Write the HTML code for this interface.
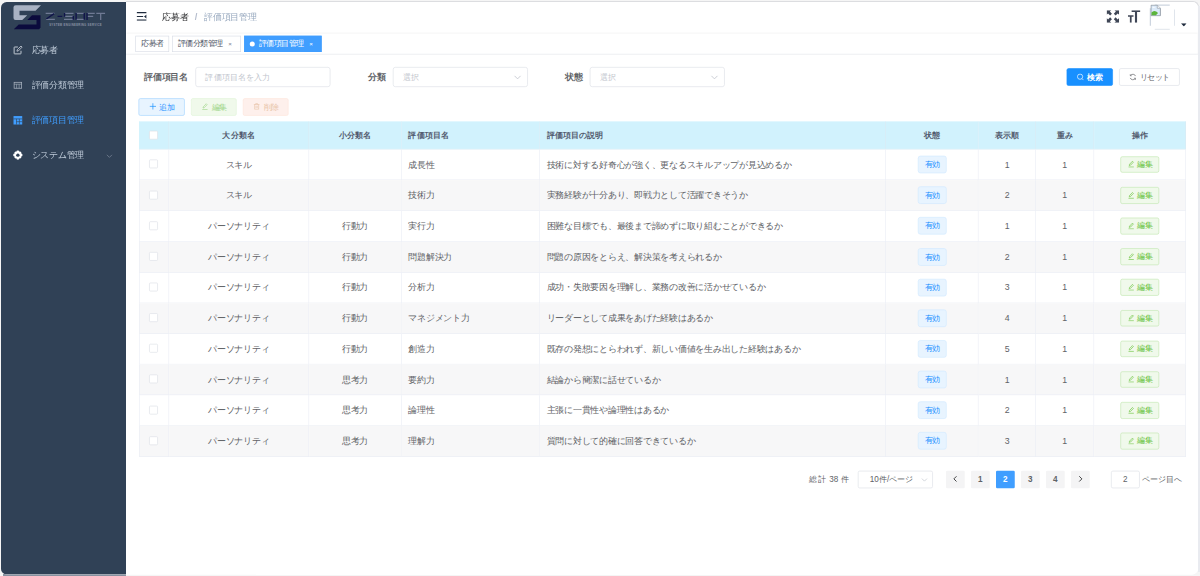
<!DOCTYPE html>
<html lang="ja">
<head>
<meta charset="utf-8">
<title>評価項目管理</title>
<style>
*{box-sizing:border-box;margin:0;padding:0}
html,body{width:1200px;height:576px;overflow:hidden;background:#f4f4f5;font-family:"Liberation Sans",sans-serif}
#frame{position:absolute;left:0;top:0;width:1200px;height:576px;overflow:hidden;background:#f5f5f5}
#stage{filter:blur(.45px);position:absolute;left:1.3px;top:2px;width:1915px;height:916px;transform:scale(.625);transform-origin:0 0;background:#fff;border-radius:9px;overflow:hidden;font-size:14px;color:#606266}
/* sidebar */
#side{position:absolute;left:0;top:0;width:200px;height:916px;background:#304156}
#logo{position:absolute;left:0;top:0;width:200px;height:50px}
.mi{position:absolute;left:0;width:200px;height:56px;line-height:54px;color:#bfcbd9;font-size:14px;padding-left:49px;white-space:nowrap}
.mi svg{position:absolute;left:18.500px;top:19px;width:16px;height:16px}
.mi.act{color:#409eff}
/* navbar */
#nav{position:absolute;left:200px;top:0;right:0;height:50px;background:#fff;box-shadow:0 1px 4px rgba(0,21,41,.08)}
#crumb{position:absolute;left:58px;top:0;line-height:48px;font-size:14px;color:#303133;white-space:nowrap}
#crumb .sep{margin:0 11px 0 10px;color:#b4bccc;font-weight:bold;font-size:15px}
#crumb .cur{color:#97a8be}
/* tags */
#tags{position:absolute;left:200px;top:50px;right:0;height:34px;background:#fff;border-bottom:1px solid #d8dce5;box-shadow:0 1px 3px 0 rgba(0,0,0,.12),0 0 3px 0 rgba(0,0,0,.04)}
.tg{display:inline-block;vertical-align:top;margin:4px 0 0 5px;height:26px;line-height:24px;border:1px solid #d8dce5;color:#495060;background:#fff;padding:0 8px;font-size:12px;white-space:nowrap}
.tg .x{display:inline-block;width:16px;text-align:center;margin-left:3.5px;font-size:10px;color:#7a8190}
.tg.act{background:#409eff;border-color:#409eff;color:#fff}
.tg.act .x{color:#fff}
.tg.act:before{content:"";display:inline-block;width:8px;height:8px;border-radius:50%;background:#fff;margin-right:7px;position:relative;top:0}
/* main */
#main{position:absolute;left:200px;top:84px;right:0;bottom:0;background:#fff}
.lbl{position:absolute;top:20px;height:32px;line-height:32px;font-size:14px;font-weight:bold;color:#606266;white-space:nowrap}
.inp{position:absolute;top:20px;height:32px;width:216px;border:1px solid #dcdfe6;border-radius:4px;background:#fff;line-height:30px;padding:0 15px;font-size:13px;color:#c0c4cc;white-space:nowrap}
.inp svg{position:absolute;right:9px;top:9px;width:13px;height:13px}
.btn{position:absolute;height:28px;line-height:26px;border:1px solid #dcdfe6;border-radius:3px;font-size:12px;text-align:center;white-space:nowrap;color:#606266;background:#fff}
.btn svg{width:12px;height:12px;vertical-align:-1.5px;margin-right:5px}

.b-add{color:#1890ff;background:#e8f4ff;border-color:#a3d3ff}
.b-edit{color:#a0d68a;background:#f0f9eb;border-color:#e1f3d8}
.b-del{color:#e9c5aa;background:#fef0ec;border-color:#fde6dc}
.b-pri{color:#fff;background:#1890ff;border-color:#1890ff;font-weight:bold}
table{position:absolute;left:21.100px;top:107.100px;border-collapse:separate;border-spacing:0;table-layout:fixed;width:1675px;font-size:14px;color:#606266}
th,td{line-height:23px;border-right:1px solid #ebeef5;border-bottom:1px solid #ebeef5;padding:0 10px;text-align:center;white-space:nowrap;overflow:hidden;vertical-align:middle}
th{height:45px;background:#d1f2fd;color:#515a6e;font-weight:bold;font-size:13px;border-right-color:#dbeaf4;border-bottom-color:#eef1f6}
td{height:49.150px}
th:first-child,td:first-child{border-left:1px solid #ebeef5}
th:first-child{border-left-color:#d1f2fd}
tr.s td{background:#f7f7f8}
.l{text-align:left;padding-left:11px}
.cb{position:relative;top:-1.500px;left:-1.200px;display:inline-block;width:14px;height:14px;border:1px solid #dcdfe6;border-radius:2px;background:#fff;vertical-align:middle}
.tag{display:inline-block;height:28px;line-height:26px;padding:0 10px;font-size:12px;color:#1890ff;background:#e8f4ff;border:1px solid #d1e9ff;border-radius:4px}
.eb{display:inline-block;height:26.500px;line-height:24.500px;vertical-align:middle;width:62px;font-size:12px;color:#67c23a;background:#f0f9eb;border:1px solid #c2e7b0;border-radius:3px}
.eb svg,.tagi{width:12px;height:12px;vertical-align:-1.500px;margin-right:4px}
.pg{position:absolute;top:666.200px;height:28px;line-height:28px;font-size:13px;color:#606266;white-space:nowrap}
.pb{position:absolute;top:666.200px;width:30px;height:28px;line-height:28px;background:#f4f4f5;border-radius:2px;text-align:center;font-size:13px;font-weight:bold;color:#606266}
.pb.on{background:#409eff;color:#fff}
.ln{position:absolute;background:#cdd5e0}
.j{display:inline-block;text-align:justify;text-align-last:justify;white-space:nowrap;word-spacing:0}
</style>
</head>
<body>
<div id="frame">
<div style="position:absolute;left:126px;top:1.200px;right:.8px;height:20px;border:1.300px solid #dcdde0;border-left:0;border-bottom:0;border-radius:0 6px 0 0"></div>
<div style="position:absolute;left:1198.200px;top:6px;width:1.800px;bottom:4px;background:#e9ebf0"></div>
<div style="position:absolute;left:3px;top:574.300px;width:123px;height:1.700px;background:#8791a0"></div>
<div id="stage">
<div id="side">
<div id="logo"><svg viewBox="0 0 200 50" width="200" height="50">
<path d="M23.6 5.2H64L55.2 14H29.6V21.2H42L34 28.8H23.2Q20 28.8 20 25.6V8.4Q20 5.2 23.6 5.2Z" fill="#a9b2c3"/>
<path d="M49.6 21.2H63.2V41.2L60.8 43.6H20.4L28.4 36H56.8V28.6H42Z" fill="#0b0b3d"/>
<path d="M71.500 18.200H85.500M72 27.600H86.200M101.700 18.200H116M101.700 22.900H115.600M100.800 27.600H115.600M120.200 18.200H133.200M120.200 27.600H133.200M137.700 18.200H150M137.700 23H147.500M152.500 18.200H166.500M159.500 18.200V28.800" fill="none" stroke="#6f7a94" stroke-width="2"/><path d="M85 18.600L72.500 27.200M90.500 23H98M101.700 17.500V23.500M115.600 22.500V28.300M120.200 17.500V28.300M133.200 17.500V28.300M137.700 17.500V28.800" fill="none" stroke="#10144a" stroke-width="2.200"/><text x="0" y="0" transform="translate(77,38.6) scale(.98,1)" font-family="Liberation Sans, sans-serif" font-weight="bold" font-size="4.6" fill="#8b93a6" letter-spacing=".5">SYSTEM ENGINEERING SERVICE</text>
</svg></div>
<div class="mi" style="top:50px"><svg viewBox="0 0 16 16" fill="none" stroke="#d5dbe4" stroke-width="1.4"><path d="M13 9v4.2a.8.8 0 0 1-.8.8H2.8a.8.8 0 0 1-.8-.8V3.800a.8.8 0 0 1 .8-.8H8"/><path d="M6.500 9.700l.5-2.300 6-6 1.800 1.800-6 6z" stroke-width="1.200"/></svg><span class="j" style="width:3.000em">応募者</span></div>
<div class="mi" style="top:106px"><svg viewBox="0 0 16 16" fill="none" stroke="#aab3c0" stroke-width="1.2"><rect x="2" y="3.500" width="12" height="9.500"/><path d="M2 6.500h12M6 6.500v6.500M10 6.500v6.500" stroke-width="1"/></svg><span class="j" style="width:6.000em">評価分類管理</span></div>
<div class="mi act" style="top:162px"><svg viewBox="0 0 16 16"><rect x="1" y="1.500" width="14" height="13.500" fill="#409eff"/><path d="M1 6h14M5.800 6v9M10.400 6v9M5.800 10.500h9.200" stroke="#304156" stroke-width="1" fill="none"/></svg><span class="j" style="width:6.000em">評価項目管理</span></div>
<div class="mi" style="top:218px"><svg viewBox="0 0 16 16"><path fill="#fff" d="M8 0.600l2 1 .4 1.500 1.500-.4 1.700 1.700-.4 1.500 1.500.4 1 2-1 2-1.500.4.400 1.500-1.700 1.700-1.500-.4-.4 1.500-2 1-2-1-.4-1.500-1.500.4-1.700-1.700.4-1.500-1.500-.4-1-2 1-2 1.500-.4-.4-1.500 1.700-1.700 1.500.4.400-1.500z" transform="translate(0,-.6)"/><circle cx="8" cy="8" r="2.700" fill="#304156"/></svg><span class="j" style="width:6.000em">システム管理</span><svg style="left:168px;top:23px;width:11px;height:11px" viewBox="0 0 12 12" fill="none" stroke="#7b8798" stroke-width="1.300"><path d="M1.500 3.800L6 8.300l4.500-4.500"/></svg></div>
</div>
<div id="nav">
<svg style="position:absolute;left:17px;top:15.800px" width="16" height="14" viewBox="0 0 16 14"><path d="M0 1h16M0 7.200h10.500M0 13h16" stroke="#1f2b3d" stroke-width="1.800" fill="none"/><path d="M16 3.800v6.800l-4.200-3.400z" fill="#1f2b3d"/></svg>
<div id="crumb"><span><span class="j" style="width:3.000em">応募者</span></span><span class="sep">/</span><span class="cur"><span class="j" style="width:6.000em">評価項目管理</span></span></div>
<svg style="position:absolute;left:1569px;top:13.200px" width="20" height="20" viewBox="0 0 20 20" fill="#3f4656"><path d="M0 0h7.500L5.200 2.300l3.300 3.300-2.900 2.900-3.300-3.300L0 7.500zM20 0v7.500l-2.300-2.300-3.300 3.300-2.900-2.900 3.300-3.300L12.500 0zM0 20v-7.500l2.300 2.300 3.300-3.300 2.900 2.900-3.300 3.300L7.500 20zM20 20h-7.500l2.300-2.300-3.300-3.300 2.900-2.900 3.300 3.300L20 12.500z"/></svg>
<svg style="position:absolute;left:1603px;top:13.200px" width="20" height="20" viewBox="0 0 20 20" fill="#3f4656"><path d="M6 0h14v3h-5.300v17h-3.400V3H6zM0 8h9v2.600H6V20H3.200v-9.400H0z"/></svg>
<div style="position:absolute;left:1638px;top:4px;width:40px;height:40px"><i class="ln" style="left:8px;top:0;width:24px;height:1.500px"></i><i class="ln" style="left:8px;bottom:0;width:24px;height:1.500px"></i><i class="ln" style="left:0;top:6px;width:1.500px;height:28px"></i><i class="ln" style="right:0;top:8px;width:1.500px;height:26px"></i><svg style="position:absolute;left:1px;top:0" width="17" height="19" viewBox="0 0 17 19"><path d="M1 1h10l5 5v12H1z" fill="#dbeaf9" stroke="#9aa3ad" stroke-width="1.600"/><path d="M11 1v5h5" fill="#fff" stroke="#9aa3ad" stroke-width="1.200"/><path d="M1.800 17.200v-4.500q3.500-4 7.500-1.500l3 2.500-3.500 3.500z" fill="#5cb53c"/><path d="M3 5l1.500-2 1.500 2 1.200-1 1 1.500z" fill="#fff"/></svg></div>
<svg style="position:absolute;left:1688px;top:34px" width="9" height="5" viewBox="0 0 9 5"><path d="M0 0h9L4.500 5z" fill="#1f2b3d"/></svg>
</div>
<div id="tags">
<span class="tg" style="margin-left:15px"><span class="j" style="width:3.000em">応募者</span></span><span class="tg"><span class="j" style="width:6.000em">評価分類管理</span><span class="x">×</span></span><span class="tg act"><span class="j" style="width:6.000em">評価項目管理</span><span class="x">×</span></span>
</div>
<div id="main">
<div class="lbl" style="left:29px"><span class="j" style="width:5.000em">評価項目名</span></div><div class="inp" style="left:111px"><span class="j" style="width:8.000em">評価項目名を入力</span></div>
<div class="lbl" style="left:387px"><span class="j" style="width:2.000em">分類</span></div><div class="inp" style="left:427px"><span class="j" style="width:2.000em">選択</span><svg viewBox="0 0 12 12" fill="none" stroke="#c0c4cc" stroke-width="1.200"><path d="M1.500 3.800L6 8.300l4.500-4.500"/></svg></div>
<div class="lbl" style="left:702px"><span class="j" style="width:2.000em">状態</span></div><div class="inp" style="left:742px"><span class="j" style="width:2.000em">選択</span><svg viewBox="0 0 12 12" fill="none" stroke="#c0c4cc" stroke-width="1.200"><path d="M1.500 3.800L6 8.300l4.500-4.500"/></svg></div>
<div class="btn b-pri" style="left:1505px;top:22px;width:73.500px"><svg viewBox="0 0 12 12" fill="none" stroke="#fff" stroke-width="1.100"><circle cx="5.500" cy="5.500" r="4.200"/><path d="M8.600 8.600L11 11"/></svg><span class="j" style="width:2.000em">検索</span></div>
<div class="btn" style="left:1589px;top:22px;width:96.500px"><svg viewBox="0 0 12 12" fill="none" stroke="#606266" stroke-width="1.100"><path d="M10.200 4.500A4.500 4.500 0 0 0 2.200 3.600M1.800 7.500a4.500 4.500 0 0 0 8 .9"/><path d="M1.800 1.500v2.500h2.500M10.200 10.500V8H7.700" stroke-width="1"/></svg><span class="j" style="width:4.000em">リセット</span></div>
<div class="btn b-add" style="left:20px;top:69.600px;width:74px"><svg viewBox="0 0 12 12" fill="none" stroke="currentColor" stroke-width="1.100"><path d="M6 1v10M1 6h10"/></svg><span class="j" style="width:2.000em">追加</span></div>
<div class="btn b-edit" style="left:104px;top:69.600px;width:73px"><svg viewBox="0 0 12 12" fill="none" stroke="currentColor" stroke-width="1"><path d="M3.200 8.600l.5-2 4.600-4.800 1.500 1.500-4.600 4.800zM2 11h8.500"/></svg><span class="j" style="width:2.000em">編集</span></div>
<div class="btn b-del" style="left:187px;top:69.600px;width:73px"><svg viewBox="0 0 12 12" fill="none" stroke="currentColor" stroke-width="1"><path d="M1.500 3h9M4.500 3V1.500h3V3M2.800 3v7.500h6.400V3M5 5v3.500M7 5v3.500"/></svg><span class="j" style="width:2.000em">削除</span></div>
<table><colgroup><col style="width:47.500px"><col style="width:224.400px"><col style="width:148px"><col style="width:221px"><col style="width:554.200px"><col style="width:148.300px"><col style="width:91.800px"><col style="width:92.500px"><col style="width:147.300px"></colgroup>
<thead><tr><th><span class="cb"></span></th><th><span class="j" style="width:4.000em">大分類名</span></th><th><span class="j" style="width:4.000em">小分類名</span></th><th class="l"><span class="j" style="width:5.000em">評価項目名</span></th><th class="l"><span class="j" style="width:7.000em">評価項目の説明</span></th><th><span class="j" style="width:2.000em">状態</span></th><th><span class="j" style="width:3.000em">表示順</span></th><th><span class="j" style="width:2.000em">重み</span></th><th><span class="j" style="width:2.000em">操作</span></th></tr></thead>
<tbody>
<tr><td><span class="cb"></span></td><td><span class="j" style="width:3.000em">スキル</span></td><td></td><td class="l"><span class="j" style="width:3.000em">成長性</span></td><td class="l"><span class="j" style="width:28.000em">技術に対する好奇心が強く、更なるスキルアップが見込めるか</span></td><td><span class="tag"><span class="j" style="width:2.000em">有効</span></span></td><td>1</td><td>1</td><td><span class="eb"><svg viewBox="0 0 12 12" fill="none" stroke="currentColor" stroke-width="1"><path d="M3.200 8.600l.5-2 4.600-4.800 1.500 1.500-4.600 4.800zM2 11h8.500"/></svg><span class="j" style="width:2.000em">編集</span></span></td></tr>
<tr class="s"><td><span class="cb"></span></td><td><span class="j" style="width:3.000em">スキル</span></td><td></td><td class="l"><span class="j" style="width:3.000em">技術力</span></td><td class="l"><span class="j" style="width:23.000em">実務経験が十分あり、即戦力として活躍できそうか</span></td><td><span class="tag"><span class="j" style="width:2.000em">有効</span></span></td><td>2</td><td>1</td><td><span class="eb"><svg viewBox="0 0 12 12" fill="none" stroke="currentColor" stroke-width="1"><path d="M3.200 8.600l.5-2 4.600-4.800 1.500 1.500-4.600 4.800zM2 11h8.500"/></svg><span class="j" style="width:2.000em">編集</span></span></td></tr>
<tr><td><span class="cb"></span></td><td><span class="j" style="width:7.000em">パーソナリティ</span></td><td><span class="j" style="width:3.000em">行動力</span></td><td class="l"><span class="j" style="width:3.000em">実行力</span></td><td class="l"><span class="j" style="width:27.000em">困難な目標でも、最後まで諦めずに取り組むことができるか</span></td><td><span class="tag"><span class="j" style="width:2.000em">有効</span></span></td><td>1</td><td>1</td><td><span class="eb"><svg viewBox="0 0 12 12" fill="none" stroke="currentColor" stroke-width="1"><path d="M3.200 8.600l.5-2 4.600-4.800 1.500 1.500-4.600 4.800zM2 11h8.500"/></svg><span class="j" style="width:2.000em">編集</span></span></td></tr>
<tr class="s"><td><span class="cb"></span></td><td><span class="j" style="width:7.000em">パーソナリティ</span></td><td><span class="j" style="width:3.000em">行動力</span></td><td class="l"><span class="j" style="width:5.000em">問題解決力</span></td><td class="l"><span class="j" style="width:20.000em">問題の原因をとらえ、解決策を考えられるか</span></td><td><span class="tag"><span class="j" style="width:2.000em">有効</span></span></td><td>2</td><td>1</td><td><span class="eb"><svg viewBox="0 0 12 12" fill="none" stroke="currentColor" stroke-width="1"><path d="M3.200 8.600l.5-2 4.600-4.800 1.500 1.500-4.600 4.800zM2 11h8.500"/></svg><span class="j" style="width:2.000em">編集</span></span></td></tr>
<tr><td><span class="cb"></span></td><td><span class="j" style="width:7.000em">パーソナリティ</span></td><td><span class="j" style="width:3.000em">行動力</span></td><td class="l"><span class="j" style="width:3.000em">分析力</span></td><td class="l"><span class="j" style="width:25.000em">成功・失敗要因を理解し、業務の改善に活かせているか</span></td><td><span class="tag"><span class="j" style="width:2.000em">有効</span></span></td><td>3</td><td>1</td><td><span class="eb"><svg viewBox="0 0 12 12" fill="none" stroke="currentColor" stroke-width="1"><path d="M3.200 8.600l.5-2 4.600-4.800 1.500 1.500-4.600 4.800zM2 11h8.500"/></svg><span class="j" style="width:2.000em">編集</span></span></td></tr>
<tr class="s"><td><span class="cb"></span></td><td><span class="j" style="width:7.000em">パーソナリティ</span></td><td><span class="j" style="width:3.000em">行動力</span></td><td class="l"><span class="j" style="width:7.000em">マネジメント力</span></td><td class="l"><span class="j" style="width:19.000em">リーダーとして成果をあげた経験はあるか</span></td><td><span class="tag"><span class="j" style="width:2.000em">有効</span></span></td><td>4</td><td>1</td><td><span class="eb"><svg viewBox="0 0 12 12" fill="none" stroke="currentColor" stroke-width="1"><path d="M3.200 8.600l.5-2 4.600-4.800 1.500 1.500-4.600 4.800zM2 11h8.500"/></svg><span class="j" style="width:2.000em">編集</span></span></td></tr>
<tr><td><span class="cb"></span></td><td><span class="j" style="width:7.000em">パーソナリティ</span></td><td><span class="j" style="width:3.000em">行動力</span></td><td class="l"><span class="j" style="width:3.000em">創造力</span></td><td class="l"><span class="j" style="width:29.000em">既存の発想にとらわれず、新しい価値を生み出した経験はあるか</span></td><td><span class="tag"><span class="j" style="width:2.000em">有効</span></span></td><td>5</td><td>1</td><td><span class="eb"><svg viewBox="0 0 12 12" fill="none" stroke="currentColor" stroke-width="1"><path d="M3.200 8.600l.5-2 4.600-4.800 1.500 1.500-4.600 4.800zM2 11h8.500"/></svg><span class="j" style="width:2.000em">編集</span></span></td></tr>
<tr class="s"><td><span class="cb"></span></td><td><span class="j" style="width:7.000em">パーソナリティ</span></td><td><span class="j" style="width:3.000em">思考力</span></td><td class="l"><span class="j" style="width:3.000em">要約力</span></td><td class="l"><span class="j" style="width:13.000em">結論から簡潔に話せているか</span></td><td><span class="tag"><span class="j" style="width:2.000em">有効</span></span></td><td>1</td><td>1</td><td><span class="eb"><svg viewBox="0 0 12 12" fill="none" stroke="currentColor" stroke-width="1"><path d="M3.200 8.600l.5-2 4.600-4.800 1.500 1.500-4.600 4.800zM2 11h8.500"/></svg><span class="j" style="width:2.000em">編集</span></span></td></tr>
<tr><td><span class="cb"></span></td><td><span class="j" style="width:7.000em">パーソナリティ</span></td><td><span class="j" style="width:3.000em">思考力</span></td><td class="l"><span class="j" style="width:3.000em">論理性</span></td><td class="l"><span class="j" style="width:14.000em">主張に一貫性や論理性はあるか</span></td><td><span class="tag"><span class="j" style="width:2.000em">有効</span></span></td><td>2</td><td>1</td><td><span class="eb"><svg viewBox="0 0 12 12" fill="none" stroke="currentColor" stroke-width="1"><path d="M3.200 8.600l.5-2 4.600-4.800 1.500 1.500-4.600 4.800zM2 11h8.500"/></svg><span class="j" style="width:2.000em">編集</span></span></td></tr>
<tr class="s"><td><span class="cb"></span></td><td><span class="j" style="width:7.000em">パーソナリティ</span></td><td><span class="j" style="width:3.000em">思考力</span></td><td class="l"><span class="j" style="width:3.000em">理解力</span></td><td class="l"><span class="j" style="width:17.000em">質問に対して的確に回答できているか</span></td><td><span class="tag"><span class="j" style="width:2.000em">有効</span></span></td><td>3</td><td>1</td><td><span class="eb"><svg viewBox="0 0 12 12" fill="none" stroke="currentColor" stroke-width="1"><path d="M3.200 8.600l.5-2 4.600-4.800 1.500 1.500-4.600 4.800zM2 11h8.500"/></svg><span class="j" style="width:2.000em">編集</span></span></td></tr>
</tbody></table>
<div class="pg" style="left:1092.500px;word-spacing:2.500px"><span class="j" style="width:5em">総計 38 件</span></div>
<div class="inp" style="left:1171px;top:666.200px;width:120px;height:28px;line-height:26px;color:#606266;padding:0 0 0 18px;border-radius:3px"><span class="j" style="width:5.390em">10件/ページ</span><svg style="top:8px;right:7px;width:11px;height:11px" viewBox="0 0 12 12" fill="none" stroke="#c0c4cc" stroke-width="1.200"><path d="M1.500 3.800L6 8.300l4.500-4.500"/></svg></div>
<div class="pb" style="left:1312px"><svg width="12" height="12" viewBox="0 0 10 10" fill="none" stroke="#303133" stroke-width="1.200" style="vertical-align:-1px"><path d="M6.500 1.500L3 5l3.500 3.500"/></svg></div>
<div class="pb" style="left:1352px">1</div>
<div class="pb on" style="left:1392px">2</div>
<div class="pb" style="left:1432px">3</div>
<div class="pb" style="left:1472px">4</div>
<div class="pb" style="left:1512px"><svg width="12" height="12" viewBox="0 0 10 10" fill="none" stroke="#303133" stroke-width="1.200" style="vertical-align:-1px"><path d="M3.500 1.500L7 5 3.500 8.500"/></svg></div>
<div class="inp" style="left:1576px;top:666.200px;width:46px;height:28px;line-height:26px;color:#606266;padding:0;text-align:center;border-radius:3px">2</div>
<div class="pg" style="left:1625px"><span class="j" style="width:5.000em">ページ目へ</span></div>
</div>
</div>
</div>
</body>
</html>
